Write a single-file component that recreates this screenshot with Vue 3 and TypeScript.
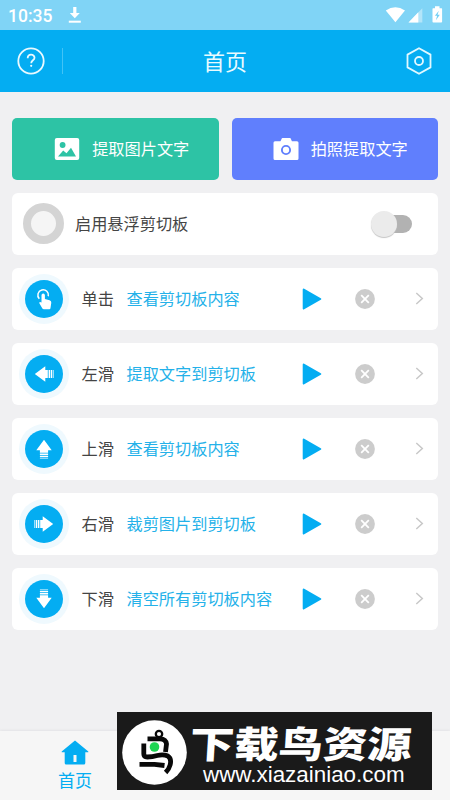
<script setup lang="ts">
interface Gesture {
  icon: 'tap' | 'arrow'
  angle: number
  name: string
  action: string
}

const gestures: Gesture[] = [
  { icon: 'tap', angle: 0, name: '单击', action: '查看剪切板内容' },
  { icon: 'arrow', angle: 0, name: '左滑', action: '提取文字到剪切板' },
  { icon: 'arrow', angle: 90, name: '上滑', action: '查看剪切板内容' },
  { icon: 'arrow', angle: 180, name: '右滑', action: '裁剪图片到剪切板' },
  { icon: 'arrow', angle: 270, name: '下滑', action: '清空所有剪切板内容' },
]
</script>

<template>
  <div class="screen">
    <div class="status">
      <span class="clock">10:35</span>
      <svg class="download" width="14" height="18" viewBox="0 0 14 18" fill="#fff">
        <path d="M5.2 1h3.200v6h3.400L6.800 12.200 1.800 7h3.400z" /><path d="M.8 14.700h12v2H.8z" />
      </svg>
      <svg class="signals" width="58" height="18" viewBox="0 0 58 18">
        <path d="M.8 4.500Q10.300-1.800 20 4.500L10.400 16.300z" fill="#fff" />
        <path d="M23.500 16.500 37.300 2.200v14.300z" fill="#fff" fill-opacity=".4" />
        <path d="M23.500 16.500 33.300 6.300v10.200z" fill="#fff" />
        <path d="M50 .3h4.500v1.900h2q.6 0 .6.600v13q0 .8-.8.800h-8q-.8 0-.8-.8v-13q0-.6.600-.6H50z" fill="#fff" />
        <path d="m53.800 4.800-3.900 5h2.200l-1.200 4.500 3.900-5.600h-2.300z" fill="#70cff5" />
      </svg>
    </div>

    <header class="bar">
      <div class="left">
        <svg width="28" height="28" viewBox="0 0 28 28" fill="none" stroke="#e9f9ff" stroke-width="1.800">
          <circle cx="14" cy="14" r="12.700" />
          <path d="M10.700 11.200c0-4.700 6.800-4.400 6.800-.5 0 2.600-3.300 2.600-3.300 5.500" />
          <circle cx="14.200" cy="18.800" r="1.100" fill="#e9f9ff" stroke="none" />
        </svg>
        <i class="divider"></i>
      </div>
      <h1>首页</h1>
      <svg class="settings" width="28" height="30" viewBox="0 0 28 30" fill="none" stroke="#e0f8ff" stroke-width="1.800" stroke-linejoin="round">
        <path d="m14 2.200 11.500 6.400v12.800L14 27.800 2.500 21.400V8.600z" /><circle cx="14" cy="15" r="4" />
      </svg>
    </header>

    <main>
      <div class="actions">
        <button class="action green">
          <svg width="26" height="24" viewBox="0 0 26 24">
            <rect x=".8" y="1" width="24.400" height="22" rx="2" fill="#fff" />
            <circle cx="8.600" cy="8" r="2.900" fill="#2dc3a5" />
            <path d="m4 19.500 5.200-6 3.300 2.800 4.500-5.500 5 8.700z" fill="#2dc3a5" />
          </svg>
          <span>提取图片文字</span>
        </button>
        <button class="action violet">
          <svg width="26" height="24" viewBox="0 0 26 24">
            <path d="M2 4.300h5.500l1.400-3q.2-.4.700-.4h7.200q.5 0 .8.400l1.300 3H24q1.500 0 1.500 1.500v15.700q0 1.500-1.500 1.500H2Q.5 23 .5 21.500V5.800Q.5 4.300 2 4.300z" fill="#fff" />
            <circle cx="13" cy="13" r="4.100" fill="#fff" stroke="#607ffd" stroke-width="1.900" />
          </svg>
          <span>拍照提取文字</span>
        </button>
      </div>

      <section class="card enable">
        <i class="ring"></i>
        <span class="label">启用悬浮剪切板</span>
        <div class="switch"><i></i></div>
      </section>

      <section v-for="g in gestures" :key="g.name" class="card gesture">
        <div class="badge">
          <svg v-if="g.icon === 'tap'" width="38" height="38" viewBox="0 0 38 38">
            <path d="M14.300 18.700A5.300 5.300 0 1 1 23.300 16.300" fill="none" stroke="#fff" stroke-width="1.500" />
            <path d="M16.500 15.200q0-1.800 1.700-1.800t1.700 1.800v3.900l4.700 1.100q1.900.500 1.700 2.500l-.8 5.300q-.1 1.200-1.200 1.200h-5.500q-.9 0-1.400-.8L14.200 23q.2-1.600 2.300-.5z" fill="#fff" />
          </svg>
          <svg v-else width="38" height="38" viewBox="0 0 38 38" fill="#fff">
            <g :transform="`rotate(${g.angle} 19 19)`">
              <path d="M9.800 19 20.300 11.300v3.600h2.500v8.200h-2.500v3.600z" />
              <path d="M23.600 14.900h1.700v8.200h-1.700zM26 14.900h1v8.200h-1zM27.700 14.900h.9v8.200h-.9z" />
            </g>
          </svg>
        </div>
        <span class="name label">{{ g.name }}</span>
        <span class="does label">{{ g.action }}</span>
        <svg class="play" width="20" height="22" viewBox="0 0 20 22">
          <path d="M1.700 1.500 18.300 11 1.700 20.500z" fill="#04adf2" stroke="#04adf2" stroke-width="2" stroke-linejoin="round" />
        </svg>
        <svg class="clear" width="20" height="20" viewBox="0 0 20 20">
          <circle cx="10" cy="10" r="9.900" fill="#ccc" />
          <path d="m6.200 6.200 7.600 7.600m0-7.600-7.600 7.600" stroke="#fff" stroke-width="1.800" />
        </svg>
        <svg class="chevron" width="9" height="13" viewBox="0 0 9 13">
          <path d="m1.300 1 6 5.500-6 5.500" fill="none" stroke="#c8c8c8" stroke-width="1.500" />
        </svg>
      </section>
    </main>

    <nav>
      <div class="tab">
        <svg width="28" height="25" viewBox="0 0 28 25">
          <path d="M14 .5 27.300 11.500v.7h-3V23q0 1.500-1.500 1.500H5.200Q3.700 24.500 3.700 23V12.200h-3v-.7zM12.500 15v7h3v-7z" fill="#04adf2" fill-rule="evenodd" />
        </svg>
        <span>首页</span>
      </div>
    </nav>

    <div class="watermark">
      <svg width="65" height="65" viewBox="0 0 65 65">
        <circle cx="32.500" cy="32.500" r="32.300" fill="#fff" />
        <g fill="none" stroke="#090909" stroke-width="4.800">
          <circle cx="37" cy="14" r="3.200" stroke-width="2.300" />
          <path d="M25.500 18.800H38Q44 19 44.500 24L43.500 32" />
          <path d="M21.800 23.500V34q0 3 3.500 3 5 0 10-1.500 6-1.500 10.500.5 4 2.500 2.300 9-1 4-4.500 7.500" />
          <path d="M17.500 44.300h15l10 1.200" />
        </g>
        <circle cx="32.500" cy="27" r="4.800" fill="#1ed553" />
      </svg>
      <div class="brand"><strong>下载鸟资源</strong><span>www.xiazainiao.com</span></div>
    </div>
  </div>
</template>

<style>
body { margin: 0; overflow: hidden; }
</style>
<style scoped>
* { box-sizing: border-box; }
svg { display: block; flex: none; }
.screen { position: relative; display: flex; flex-direction: column; width: 450px; height: 800px; background: #f0f0f2; font-family: Roboto, "Noto Sans CJK SC", sans-serif; }
.status { display: flex; height: 30px; padding: 0 7px 0 8px; align-items: center; background: #80d4f6; color: #fff; }
.clock { width: 60px; font-size: 17.500px; font-weight: 500; line-height: 30px; padding-top: 2px; }
.signals { margin-left: auto; }
.bar { display: grid; grid-template-columns: 1fr auto 1fr; align-items: center; height: 62px; padding: 0 17px; background: #04adf2; }
.left { display: flex; align-items: center; gap: 17px; }
.divider { width: 1px; height: 26px; background: #42c3f6; }
h1 { margin: 0; padding-top: 3px; font-size: 22px; font-weight: 400; line-height: 32px; color: #e9fbff; }
.settings { justify-self: end; }
main { flex: 1; display: flex; flex-direction: column; padding: 25.500px 12px 0; gap: 12.500px; }
.actions { display: grid; grid-template-columns: 1fr 1fr; gap: 13px; }
.action { display: flex; align-items: center; justify-content: center; gap: 12px; height: 62.500px; padding: 0 0 0 12px; margin: 0; border: 0; border-radius: 5px; color: #fff; font-family: inherit; font-size: 16.200px; font-weight: 400; }
.action span, .label { padding-bottom: 2px; }
.green { padding-left: 13px; background: #2dc3a5; }
.violet { padding-left: 11px; background: #607ffd; }
.card { display: flex; align-items: center; flex: none; height: 62.500px; border-radius: 6px; background: #fff; color: #444; font-size: 16.200px; }
.enable { padding: 0 26px 0 11px; }
.ring { width: 41px; height: 41px; margin-right: 11px; border: 8px solid #d4d4d4; border-radius: 50%; background: #f5f5f5; }
.switch { display: flex; align-items: center; width: 38px; height: 18px; margin-left: auto; border-radius: 9px; background: #b2b2b2; }
.switch i { flex: none; width: 26px; height: 26px; margin-left: -3px; border-radius: 50%; background: #ebebeb; box-shadow: 0 1px 1px #c4c4c4; }
.gesture { padding-left: 6.500px; padding-right: 14px; }
.badge { flex: none; width: 50px; height: 50px; padding: 6px; border-radius: 50%; background: #eff9fe; }
.badge svg { border-radius: 50%; background: #04adf2; }
.name { width: 45px; margin-left: 13px; }
.does { color: #24b1e9; white-space: nowrap; }
.play { margin-left: auto; margin-right: 33px; }
.clear { margin-right: 40px; }
nav { height: 69.500px; background: #f6f6f6; box-shadow: 0 -1px 2px #e4e4e6; }
.tab { display: flex; flex-direction: column; align-items: center; width: 150px; padding-top: 9px; color: #04adf2; font-size: 17px; line-height: 24px; }
.tab span { margin-top: 4px; }
.watermark { position: absolute; left: 117px; top: 712px; display: flex; align-items: flex-start; width: 315px; height: 78px; padding: 7.500px 0 0 5px; background: #1a1a1a; color: #fff; }
.brand { display: flex; flex-direction: column; }
.brand strong { margin: 2px 0 0 3px; font-family: "Noto Sans CJK SC", sans-serif; font-size: 37px; line-height: 40px; font-weight: 900; white-space: nowrap; transform: scaleX(1.200) skewX(-3deg); transform-origin: left center; }
.brand span { margin: 2px 0 0 16px; font-family: "Liberation Sans", sans-serif; font-size: 22.400px; line-height: 22px; }
</style>
